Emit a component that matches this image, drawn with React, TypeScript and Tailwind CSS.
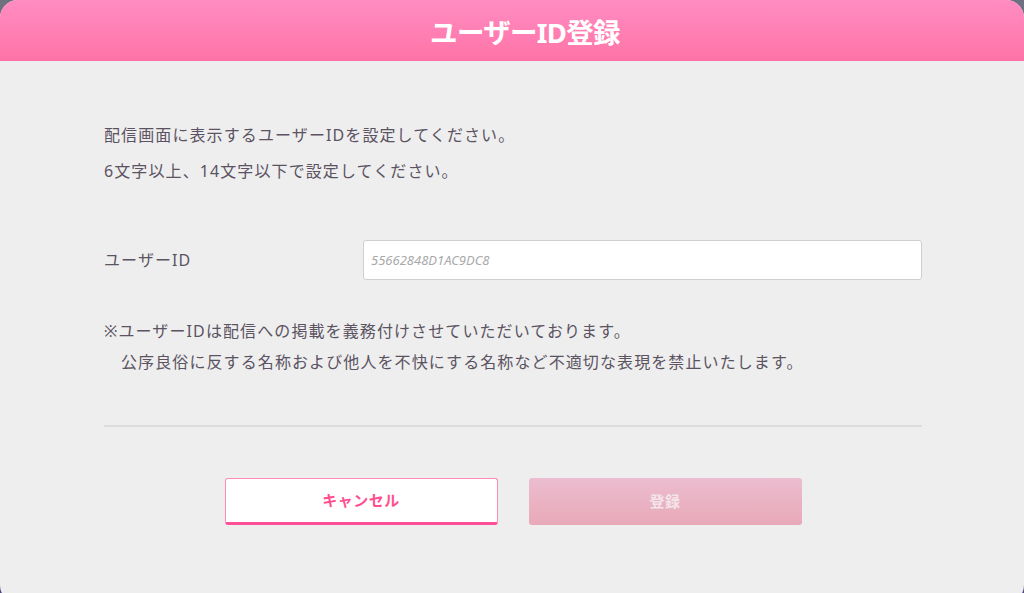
export default function App() {
  return (
    <div
      className="h-[593px] w-[1024px] overflow-hidden bg-gradient-to-b from-[#6f7080] to-[#4f4585]"
      style={{ fontFamily: '"Noto Sans", "Noto Sans CJK JP", sans-serif' }}
    >
      <div className="flex h-[603px] w-full flex-col overflow-hidden rounded-[18px] bg-[#eeeeee]">
        <header className="flex h-[61px] shrink-0 items-center justify-center bg-gradient-to-b from-[#ff8cc2] to-[#ff73a6]">
          <h1 className="ml-[26px] mt-[4px] text-[27.5px] font-bold leading-none tracking-tight text-white">ユーザーID登録</h1>
        </header>

        <main className="flex flex-col pl-[104px] pr-[102px] pt-[63px]">
          <div className="space-y-[14px] text-[16px] leading-[22px] tracking-[1.1px] text-[#5b5362]">
            <p>配信画面に表示するユーザーIDを設定してください。</p>
            <p>6文字以上、14文字以下で設定してください。</p>
          </div>

          <div className="mt-[58px] flex items-center">
            <label className="w-[259px] text-[16px] tracking-[1.1px] text-[#5b5362]">ユーザーID</label>
            <input
              className="h-[40px] flex-1 rounded-[3px] border border-[#cfcfcf] bg-white px-[7px] text-[13px] italic text-[#9a9a9a] outline-none placeholder:text-[#aaaaaa]"
              placeholder="55662848D1AC9DC8"
            />
          </div>

          <div className="mt-[40px] space-y-[9px] text-[16px] leading-[22px] tracking-[1.1px] text-[#5b5362]">
            <p>※ユーザーIDは配信への掲載を義務付けさせていただいております。</p>
            <p className="pl-[17px]">公序良俗に反する名称および他人を不快にする名称など不適切な表現を禁止いたします。</p>
          </div>

          <hr className="mt-[52px] border-t-2 border-[#dcdcdc]" />

          <div className="mt-[51px] flex justify-center gap-[31px]">
            <button className="h-[47px] w-[273px] rounded-[3px] border border-b-[3px] border-[#ff8ab8] border-b-[#ff4f96] bg-white text-[15px] font-bold tracking-[0.5px] text-[#ff4f90]">
              キャンセル
            </button>
            <button className="h-[47px] w-[273px] rounded-[3px] bg-gradient-to-b from-[#ebbdd0] to-[#e8a9b8] text-[15px] font-bold tracking-[0.5px] text-[#f3e4ea]">
              登録
            </button>
          </div>
        </main>
      </div>
    </div>
  );
}
